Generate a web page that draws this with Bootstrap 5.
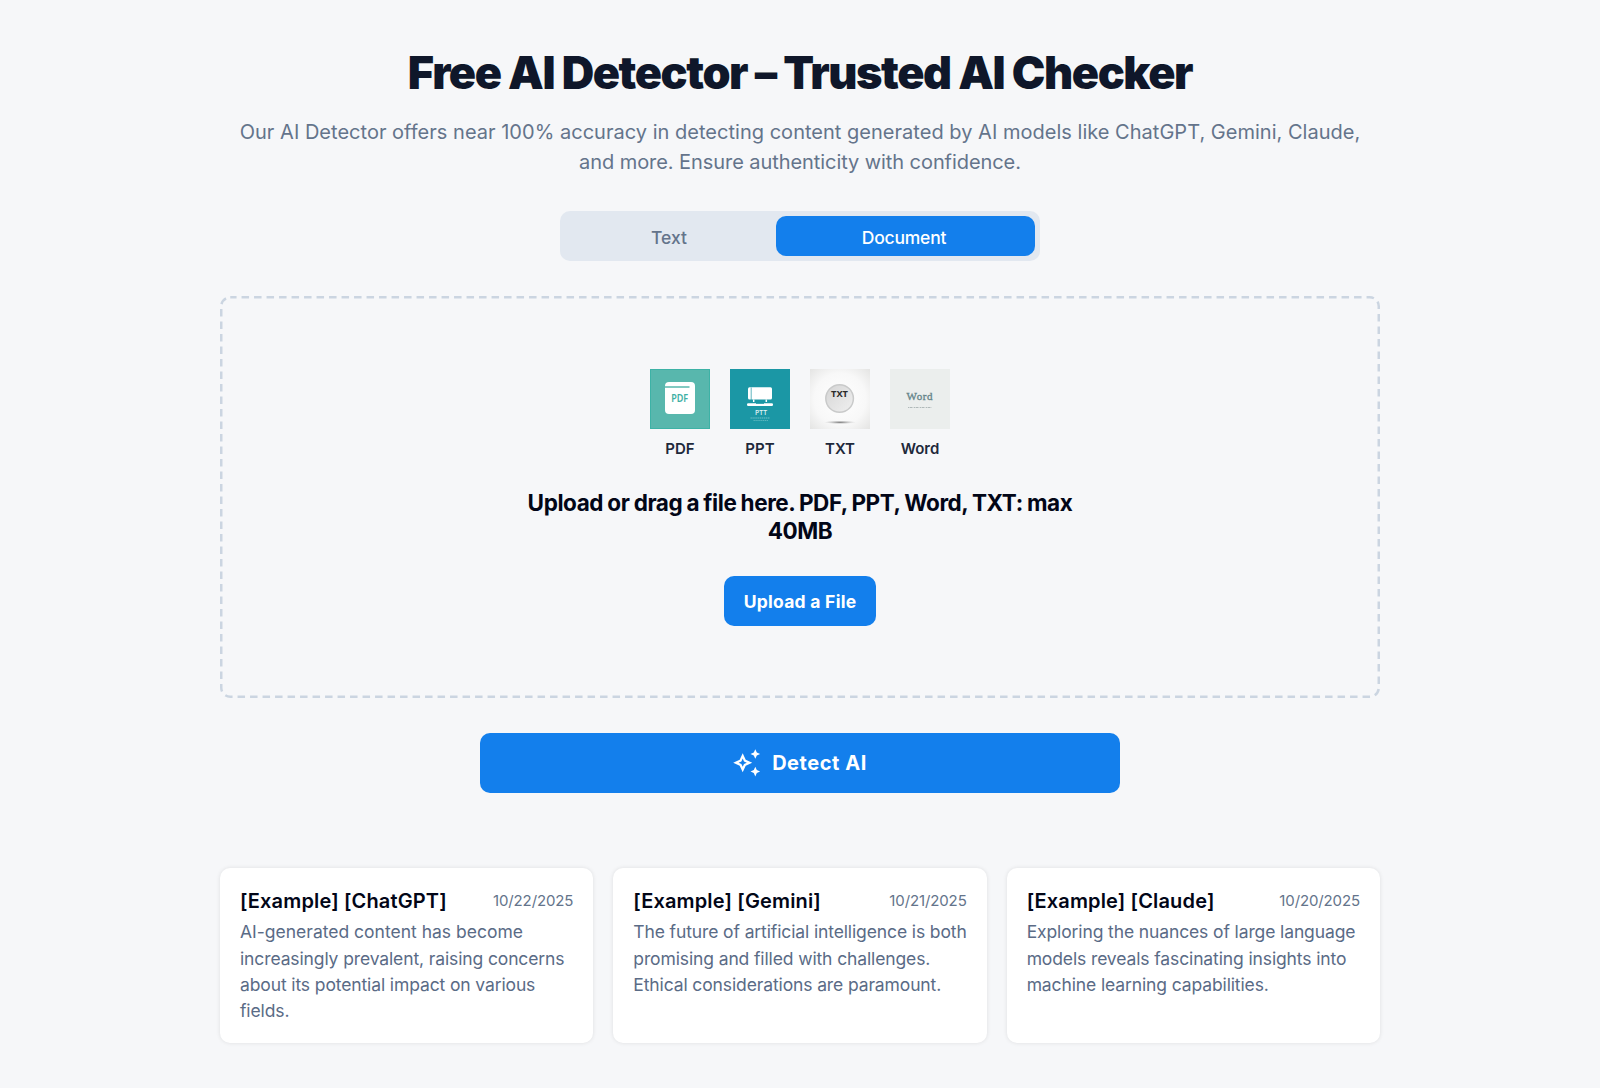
<!DOCTYPE html>
<html lang="en">
<head>
<meta charset="utf-8">
<meta name="viewport" content="width=device-width, initial-scale=1">
<title>Free AI Detector</title>
<link href="https://cdn.jsdelivr.net/npm/bootstrap@5.3.0/dist/css/bootstrap.min.css" rel="stylesheet">
<style>
body{background:#f6f7f9;font-family:Inter,"Noto Sans",sans-serif;color:#020617;min-height:1088px}
.page-col{width:1160px;padding-top:45px}
.hero-title{font-size:45px;line-height:56.25px;font-weight:900;letter-spacing:-1.43px;color:#0f172a}
.hero-sub{font-size:20px;line-height:30px;color:#64748b;margin-top:16px;letter-spacing:.02px}
.hero-sub .snug{letter-spacing:-.07px}
.switcher{width:480px;height:50px;padding:5px;background:#e2e8f0;border-radius:10px;margin-top:34px;font-size:17.5px}
.switcher button{border:0;background:none;border-radius:10px;font-weight:500;color:#64748b;padding:4px 0 0}
.switcher .opt-text{width:211px;padding-right:3px}
.switcher .opt-doc{width:259px;background:#137fec;color:#fff;padding-right:3px;letter-spacing:-.2px}
.drop-zone{height:402px;margin-top:35px;padding-top:73px}
.dash-frame{pointer-events:none}
.kinds{gap:20px}
.kind{width:60px;gap:9px}
.kind svg{display:block}
.kind span{font-size:15px;line-height:22.5px;font-weight:600;color:#1e293b}
.drop-title{width:600px;font-size:22.5px;line-height:28.125px;font-weight:700;letter-spacing:-.42px;word-spacing:-.7px;margin-top:28px}
.solid-btn{background:#137fec;color:#fff;border:0;border-radius:10px;font-weight:700}
.upload-btn{width:152px;height:50px;margin-top:30.5px;padding:3px 0 0;font-size:17.5px;letter-spacing:.2625px}
.detect-btn{width:640px;height:60px;margin-top:35px;font-size:20px;letter-spacing:.55px;gap:11px}
.samples{gap:20px;margin-top:75px}
.sample{flex:1 1 0;min-width:0;height:175px;padding:21px 20px 19px;border-radius:10px;background:#fff;box-shadow:0 0 4px rgba(0,0,0,.1)}
.sample h2{font-size:20px;line-height:25px;font-weight:600;letter-spacing:.15px;margin:0}
.sample time{font-size:15px;line-height:23.5px;letter-spacing:-.12px;color:#64748b}
.sample p{font-size:17.5px;line-height:26.25px;color:#5a6b86;letter-spacing:-.12px;margin:5px 0 0;white-space:nowrap}
.sample .roomy{letter-spacing:0}
</style>
<script src="https://cdn.jsdelivr.net/npm/bootstrap@5.3.0/dist/js/bootstrap.bundle.min.js"></script>
</head>
<body>
<main class="page-col mx-auto d-flex flex-column align-items-center">
  <h1 class="hero-title text-center text-nowrap mb-0">Free AI Detector – Trusted AI Checker</h1>
  <p class="hero-sub text-center text-nowrap mb-0">Our AI Detector offers near 100% accuracy in detecting content generated by AI models like ChatGPT, Gemini, Claude,<br><span class="snug">and more. Ensure authenticity with confidence.</span></p>
  <div class="switcher d-flex">
    <button type="button" class="opt-text">Text</button>
    <button type="button" class="opt-doc">Document</button>
  </div>
  <section class="drop-zone w-100 position-relative d-flex flex-column align-items-center">
    <svg class="dash-frame position-absolute top-0 start-0" width="1160" height="402" aria-hidden="true"><rect x="1.25" y="1.25" width="1157.5" height="399.5" rx="9" fill="none" stroke="#cbd5e1" stroke-width="2.5" stroke-dasharray="7.5 5" stroke-dashoffset="1.2"/></svg>
    <div class="kinds d-flex">
      <div class="kind d-flex flex-column align-items-center">
        <svg width="60" height="60" viewBox="0 0 60 60"><rect width="60" height="60" fill="#3db2a6"/><rect x="1" y="1" width="58" height="58" fill="#58b7ad"/><rect x="15" y="13" width="30" height="32" rx="4" fill="#fff"/><path d="M15 18H39.500" stroke="#58b7ad" stroke-width="1.500"/><text transform="translate(21.200 32.500) scale(.95 1.080)" font-family="Noto Sans" font-size="9.500" font-weight="600" fill="#3fb0a4">PDF</text></svg>
        <span>PDF</span>
      </div>
      <div class="kind d-flex flex-column align-items-center">
        <svg width="60" height="60" viewBox="0 0 60 60"><rect width="60" height="60" fill="#1b97a5"/><rect x="18" y="18.300" width="24" height="12.200" rx="1.500" fill="#fff"/><path d="M21.200 18.500V31" stroke="#1b97a5" stroke-width=".7"/><path d="M23.700 30.500v2.500M36.300 30.500v2.500" stroke="#fff" stroke-width="1.500"/><rect x="17" y="34.200" width="26" height="2.800" rx="1.200" fill="#fff"/><path d="M26 34.400h8" stroke="#1b97a5" stroke-width=".9"/><text transform="translate(25 46) scale(.95 1.050)" font-family="Noto Sans" font-size="7.200" font-weight="500" fill="#e4f6f6">PTT</text><path d="M20.500 49H40" stroke="#8fd0d4" stroke-width="1" stroke-dasharray="1.400 .5" opacity=".75"/><path d="M23.500 51.500H38" stroke="#8fd0d4" stroke-width=".8" stroke-dasharray="1.400 .5" opacity=".65"/></svg>
        <span>PPT</span>
      </div>
      <div class="kind d-flex flex-column align-items-center">
        <svg width="60" height="60" viewBox="0 0 60 60"><defs><radialGradient id="paper" cx=".5" cy=".5" r=".72"><stop offset="0" stop-color="#fff"/><stop offset=".6" stop-color="#f8f8f8"/><stop offset="1" stop-color="#e3e3e2"/></radialGradient><linearGradient id="disc" x1="0" y1="0" x2="1" y2="1"><stop offset="0" stop-color="#d5d5d5"/><stop offset="1" stop-color="#f0f0f0"/></linearGradient><radialGradient id="shade"><stop offset="0" stop-color="#777"/><stop offset="1" stop-color="#bbb" stop-opacity="0"/></radialGradient></defs><rect width="60" height="60" fill="url(#paper)"/><circle cx="29.600" cy="29.500" r="13.800" fill="url(#disc)" stroke="#c9caca" stroke-width="1.500"/><ellipse cx="30" cy="53.300" rx="16" ry="1.800" fill="url(#shade)"/><text x="29.500" y="28" text-anchor="middle" font-family="Noto Sans" font-size="8" font-weight="700" fill="#2b2b2b" textLength="17" lengthAdjust="spacingAndGlyphs">TXT</text></svg>
        <span>TXT</span>
      </div>
      <div class="kind d-flex flex-column align-items-center">
        <svg width="60" height="60" viewBox="0 0 60 60"><rect width="60" height="60" fill="#ebeeed"/><text x="29.600" y="30.700" text-anchor="middle" font-family="Liberation Serif" font-size="11" fill="#66858a" stroke="#66858a" stroke-width=".35" textLength="26">Word</text><path d="M18 38.500H42" stroke="#a3adae" stroke-width=".9" stroke-dasharray="1.300 .6 2.100 .5 .8 .7" opacity=".9"/></svg>
        <span>Word</span>
      </div>
    </div>
    <h2 class="drop-title text-center mb-0">Upload or drag a file here. PDF, PPT, Word, TXT: max<br>40MB</h2>
    <button type="button" class="solid-btn upload-btn">Upload a File</button>
  </section>
  <button type="button" class="solid-btn detect-btn p-0 d-flex align-items-center justify-content-center">
    <svg width="28" height="28" viewBox="0 0 28 28" fill="#fff" aria-hidden="true"><path fill-rule="evenodd" d="M9.700 4.200 12.700 10.700 19.200 13.700 12.700 16.700 9.700 23.200 6.700 16.700.2 13.700 6.700 10.700ZM9.700 9.600 8.400 12.400 5.600 13.700 8.400 15 9.700 17.800 11 15 13.800 13.700 11 12.400Z"/><path d="M22.300.2 23.800 3.500 27.100 5 23.800 6.500 22.300 9.800 20.800 6.500 17.500 5 20.800 3.500ZM22.300 17.800 23.800 21.100 27.100 22.600 23.800 24.100 22.300 27.400 20.800 24.100 17.500 22.600 20.800 21.100Z"/></svg>
    <span>Detect AI</span>
  </button>
  <section class="samples w-100 d-flex">
    <article class="sample"><div class="d-flex justify-content-between"><h2>[Example] [ChatGPT]</h2><time>10/22/2025</time></div><p><span class="roomy">AI-generated content has become</span><br>increasingly prevalent, raising concerns<br>about its potential impact on various<br>fields.</p></article>
    <article class="sample"><div class="d-flex justify-content-between"><h2>[Example] [Gemini]</h2><time>10/21/2025</time></div><p>The future of artificial intelligence is both<br>promising and filled with challenges.<br>Ethical considerations are paramount.</p></article>
    <article class="sample"><div class="d-flex justify-content-between"><h2>[Example] [Claude]</h2><time>10/20/2025</time></div><p>Exploring the nuances of large language<br>models reveals fascinating insights into<br>machine learning capabilities.</p></article>
  </section>
</main>
</body>
</html>
